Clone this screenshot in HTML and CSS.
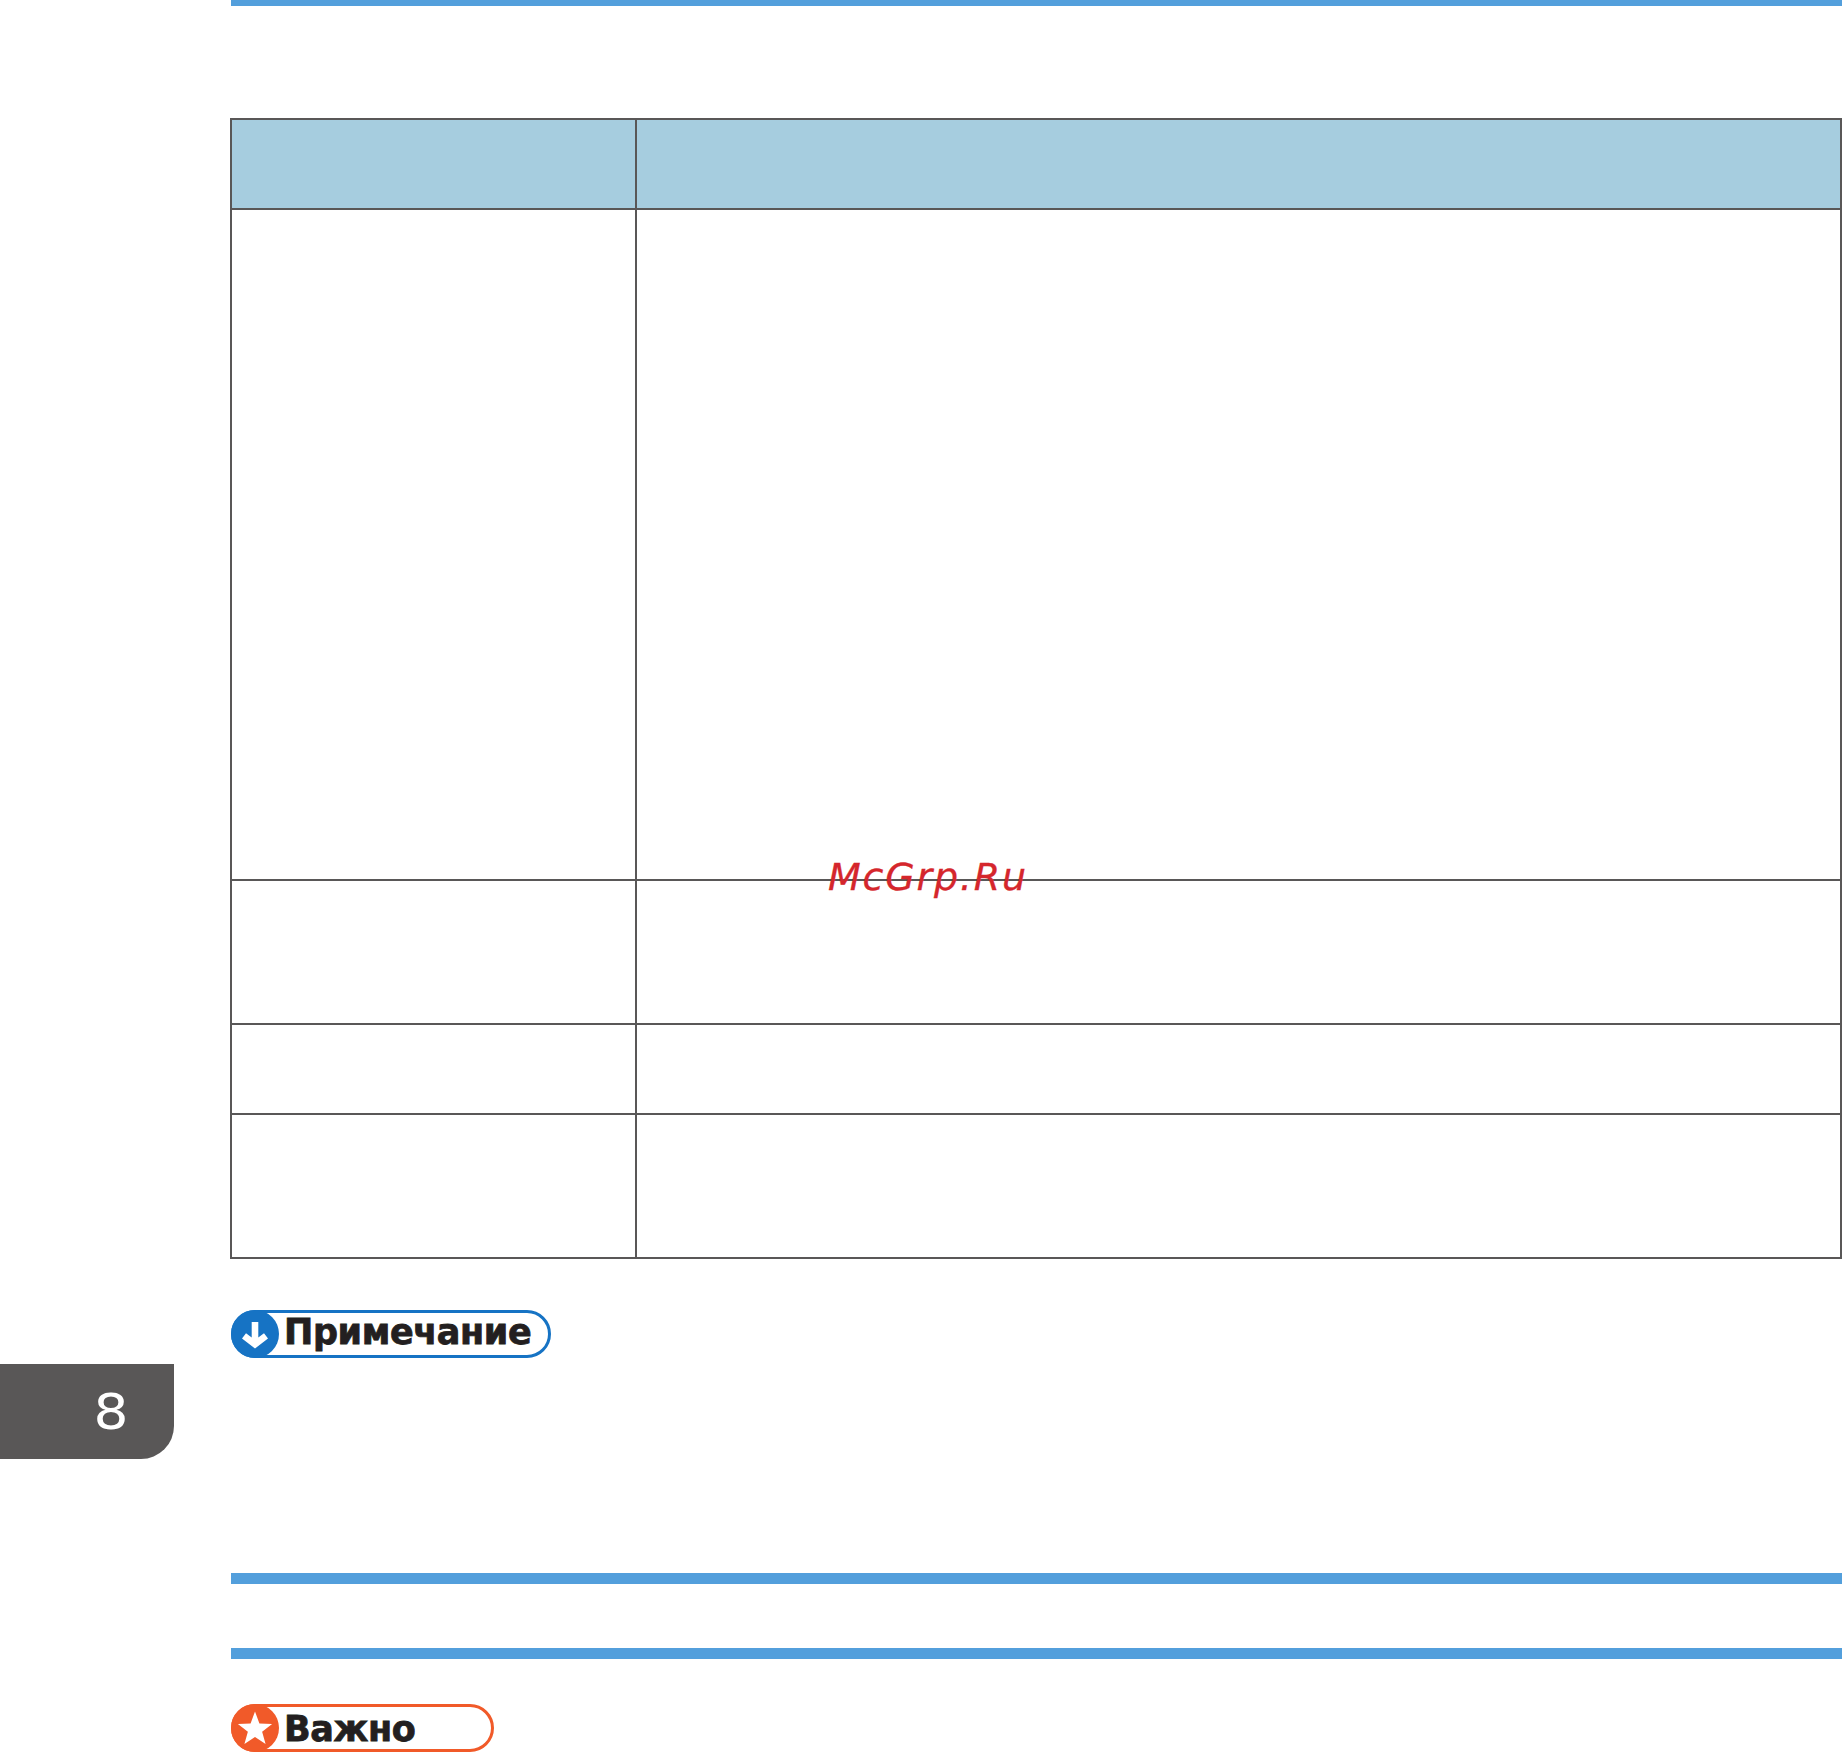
FILE: index.html
```html
<!DOCTYPE html>
<html lang="ru">
<head>
<meta charset="utf-8">
<title>McGrp.Ru</title>
<link rel="stylesheet" href="styles.css">
</head>
<body>
<div class="page">
  <aside class="rail">
    <div class="chapter-tab"><span class="chapter-num">8</span></div>
  </aside>
  <main class="content">
    <div class="bar bar-top"></div>
    <div class="table">
      <div class="cell head"></div><div class="cell head"></div>
      <div class="cell"></div><div class="cell"></div>
      <div class="cell"></div><div class="cell"></div>
      <div class="cell"></div><div class="cell"></div>
      <div class="cell"></div><div class="cell"></div>
    </div>
    <div class="badge badge-note">
      <svg class="badge-icon" viewBox="0 0 48 48" aria-hidden="true">
        <circle cx="24" cy="24" r="24" fill="#1673c4"/>
        <path d="M20.700 12h6.600v15.500l5.700-4.200 4 5.200L24 38.500 11 28.500l4-5.200 5.700 4.200z" fill="#fff"/>
      </svg>
      <span class="badge-label">Примечание</span>
    </div>
    <div class="bar bar-section"></div>
    <div class="bar bar-heading"></div>
    <div class="badge badge-important">
      <svg class="badge-icon" viewBox="0 0 48 48" aria-hidden="true">
        <circle cx="24" cy="24" r="24" fill="#f15a29"/>
        <path d="M24 7.500 28.410 19.430 41.120 19.940 31.130 27.820 34.580 40.060 24 33 13.420 40.060 16.870 27.820 6.880 19.940 19.590 19.430z" fill="#fff"/>
      </svg>
      <span class="badge-label">Важно</span>
    </div>
  </main>
  <div class="watermark">McGrp.Ru</div>
</div>
</body>
</html>
```
FILE: styles.css
```css
html, body {
  margin: 0;
  padding: 0;
  background: #fff;
}
.page {
  position: relative;
  display: flex;
  width: 1842px;
  height: 1753px;
  overflow: hidden;
}
.rail {
  flex: 0 0 231px;
}
.chapter-tab {
  box-sizing: border-box;
  display: flex;
  align-items: center;
  justify-content: flex-end;
  width: 174px;
  height: 95px;
  margin-top: 1364px;
  padding-right: 47px;
  background: #595757;
  border-bottom-right-radius: 33px;
}
.chapter-num {
  display: block;
  font-family: "DejaVu Sans", sans-serif;
  font-size: 50px;
  font-weight: 400;
  line-height: 1;
  color: #fff;
  transform: scaleX(1.1);
}
.content {
  flex: 1;
  min-width: 0;
}
.bar {
  background: #539fdc;
}
.bar-top {
  height: 6px;
}
.table {
  display: grid;
  grid-template-columns: 403px 1203px;
  grid-template-rows: 88px 669px 142px 88px 142px;
  gap: 2px;
  box-sizing: border-box;
  width: 1612px;
  margin: 112px 0 0 -1px;
  padding: 2px;
  background: #595757;
}
.cell {
  background: #fff;
}
.cell.head {
  background: #a6cddf;
}
.badge {
  box-sizing: border-box;
  position: relative;
  display: flex;
  align-items: center;
  height: 48px;
  padding-left: 50px;
  border: 3px solid;
  border-radius: 24px;
  background: #fff;
}
.badge-note {
  width: 320px;
  margin-top: 51px;
  padding-bottom: 3px;
  border-color: #1673c4;
}
.badge-important {
  width: 263px;
  margin-top: 45px;
  padding-top: 2px;
  border-color: #f15a29;
}
.badge-icon {
  position: absolute;
  left: -3px;
  top: -3px;
  width: 48px;
  height: 48px;
}
.badge-label {
  font-family: "DejaVu Sans", sans-serif;
  font-size: 35px;
  font-weight: 700;
  line-height: 1;
  letter-spacing: -0.4px;
  -webkit-text-stroke: 0.8px #231f20;
  color: #231f20;
}
.bar-section {
  height: 11px;
  margin-top: 215px;
}
.bar-heading {
  height: 11px;
  margin-top: 64px;
}
.watermark {
  position: absolute;
  left: 828px;
  top: 855px;
  font-family: "DejaVu Sans", sans-serif;
  font-style: italic;
  font-size: 38px;
  line-height: 1.2;
  letter-spacing: 1.8px;
  -webkit-text-stroke: 0.3px #d5262c;
  color: #d5262c;
}
```
